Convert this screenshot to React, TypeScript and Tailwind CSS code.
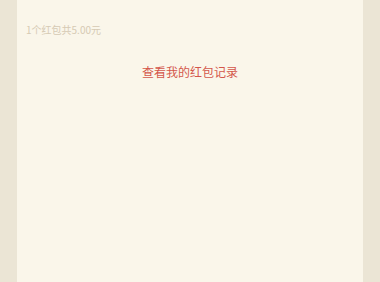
export default function App() {
  return (
    <div
      className="w-full h-[282px] bg-[#ebe5d5] px-[17px] flex"
      style={{ fontFamily: '"Noto Sans CJK SC", "Noto Sans", sans-serif' }}
    >
      <div className="flex-1 bg-[#faf6ea] flex flex-col">
        <div className="pt-[22px] pl-[9px] text-[10px] leading-[16px] text-[#d6cab4]">
          1个红包共5.00元
        </div>
        <div className="mt-[25px] text-center text-[12px] leading-[18px] text-[#d4564a]">
          查看我的红包记录
        </div>
      </div>
    </div>
  );
}
